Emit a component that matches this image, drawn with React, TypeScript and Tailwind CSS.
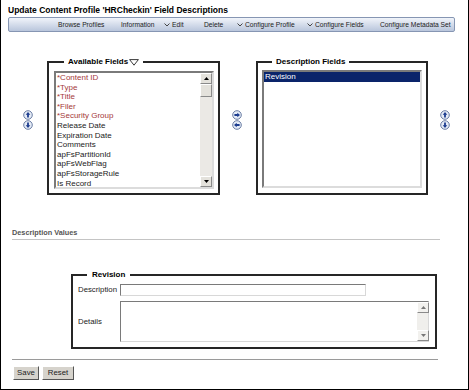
import React from 'react';

function RoundBtn({ dir }: { dir: 'up' | 'down' | 'left' | 'right' }) {
  const rot = { up: 0, right: 90, down: 180, left: 270 }[dir];
  return (
    <svg width="10" height="10" viewBox="0 0 10 10" className="block">
      <circle cx="5" cy="5" r="4.3" fill="#e6ecf6" stroke="#5b6f9a" strokeWidth="0.9" />
      <g transform={`rotate(${rot} 5 5)`}>
        <path d="M5 2 L7.3 4.7 H5.9 V7.6 H4.1 V4.7 H2.7 Z" fill="#1c3c8f" />
      </g>
    </svg>
  );
}

function ScrollBtn({ up, light }: { up: boolean; light?: boolean }) {
  return (
    <div className={`w-[12px] h-[11px] ${light ? 'bg-[#f2f1ee]' : 'bg-[#e4e2dc]'} border border-t-white border-l-white border-b-[#8a8a8a] border-r-[#8a8a8a] flex items-center justify-center`}>
      <svg width="5" height="3" viewBox="0 0 5 3">
        <path d={up ? 'M0 3 L2.5 0 L5 3Z' : 'M0 0 L5 0 L2.5 3Z'} fill={light ? '#777' : '#000'} />
      </svg>
    </div>
  );
}

function Chevron() {
  return (
    <svg width="6" height="4" viewBox="0 0 6 4" className="mr-[2px] shrink-0">
      <path d="M0.5 0.5 L3 3 L5.5 0.5" fill="none" stroke="#333" strokeWidth="0.9" />
    </svg>
  );
}

const fields: { t: string; red?: boolean }[] = [
  { t: '*Content ID', red: true },
  { t: '*Type', red: true },
  { t: '*Title', red: true },
  { t: '*Filer', red: true },
  { t: '*Security Group', red: true },
  { t: 'Release Date' },
  { t: 'Expiration Date' },
  { t: 'Comments' },
  { t: 'apFsPartitionId' },
  { t: 'apFsWebFlag' },
  { t: 'apFsStorageRule' },
  { t: 'Is Record' },
];

export default function App() {
  return (
    <div className="w-[469px] h-[390px] box-border border-l border-r border-b border-black bg-white font-['Liberation_Sans',Arial,sans-serif] text-[#222] overflow-hidden">
      {/* Title */}
      <div className="h-[17px] pt-[5px] pl-[7px] text-[8.5px] leading-[10px] font-bold text-black whitespace-nowrap">
        Update Content Profile 'HRCheckin' Field Descriptions
      </div>
      {/* Menu bar */}
      <div className="ml-[7px] w-[447px] h-[15px] rounded-[2px] border border-[#8696b3] bg-gradient-to-b from-[#f1f4fa] to-[#b9c6dc] flex items-center pl-[49px] text-[6.7px] leading-[9px] text-[#222] whitespace-nowrap">
        <span className="w-[63px]">Browse Profiles</span>
        <span className="w-[43px]">Information</span>
        <span className="w-[40px] flex items-center"><Chevron />Edit</span>
        <span className="w-[33px]">Delete</span>
        <span className="w-[70px] flex items-center"><Chevron />Configure Profile</span>
        <span className="w-[73px] flex items-center"><Chevron />Configure Fields</span>
        <span>Configure Metadata Set</span>
      </div>

      {/* Main fields row */}
      <div className="mt-[25px] flex items-start pl-[22px]">
        <div className="w-[10px] mt-[53px] flex flex-col">
          <RoundBtn dir="up" />
          <RoundBtn dir="down" />
        </div>
        <fieldset className="ml-[14px] w-[173px] h-[138px] border-2 border-[#262626] box-border">
          <legend className="ml-[15px] px-[4px] text-[8px] leading-[10px] font-bold text-black flex items-center">
            Available Fields
            <svg width="10" height="7" viewBox="0 0 10 7" className="ml-[1px]">
              <path d="M0.6 0.6 H9.4 L5 6.2 Z" fill="none" stroke="#222" strokeWidth="0.9" />
            </svg>
          </legend>
          <div className="mt-[4px] ml-[5px] w-[160px] h-[118px] border-2 border-t-[#7a7a7a] border-l-[#7a7a7a] border-b-[#dcdcdc] border-r-[#dcdcdc] box-border flex bg-white">
            <div className="flex-1 pl-[1px] text-[8px] leading-[9.6px] whitespace-nowrap overflow-hidden">
              {fields.map((f) => (
                <div key={f.t} className={f.red ? 'text-[#a53a3a]' : 'text-[#222]'}>{f.t}</div>
              ))}
            </div>
            <div className="w-[12px] flex flex-col bg-[#ebe9e5]">
              <ScrollBtn up />
              <div className="h-[13px] bg-[#e4e2dc] border border-t-white border-l-white border-b-[#8a8a8a] border-r-[#8a8a8a]" />
              <div className="flex-1" />
              <ScrollBtn up={false} />
            </div>
          </div>
        </fieldset>
        <div className="ml-[12px] w-[10px] mt-[53px] flex flex-col">
          <RoundBtn dir="right" />
          <RoundBtn dir="left" />
        </div>
        <fieldset className="ml-[14px] w-[172px] h-[138px] border-2 border-[#262626] box-border">
          <legend className="ml-[14px] px-[4px] text-[8px] leading-[10px] font-bold text-black">
            Description Fields
          </legend>
          <div className="mt-[3px] ml-[4px] w-[160px] h-[118px] border-2 border-t-[#7a7a7a] border-l-[#7a7a7a] border-b-[#dcdcdc] border-r-[#dcdcdc] box-border bg-white">
            <div className="bg-[#0a246a] text-white text-[8px] leading-[10px] pl-[1px]">Revision</div>
          </div>
        </fieldset>
        <div className="ml-[12px] w-[10px] mt-[53px] flex flex-col">
          <RoundBtn dir="up" />
          <RoundBtn dir="down" />
        </div>
      </div>

      {/* Description Values */}
      <div className="mt-[33px] ml-[11px] w-[428px] border-b border-[#c4c4c4] text-[7.3px] leading-[10px] font-bold text-[#555] pb-[1px]">
        Description Values
      </div>

      <fieldset className="mt-[30px] ml-[70px] w-[366px] border-2 border-[#262626] box-border pb-[5px]">
        <legend className="ml-[14px] px-[5px] text-[8px] leading-[10px] font-bold text-black">Revision</legend>
        <div className="mt-[4px] flex items-center pl-[5px]">
          <span className="w-[42px] text-[7.8px] leading-[10px]">Description</span>
          <div className="w-[246px] h-[12px] border border-t-[#7a7a7a] border-l-[#7a7a7a] border-b-[#d8d8d8] border-r-[#d8d8d8] bg-white" />
        </div>
        <div className="mt-[5px] flex items-center pl-[5px]">
          <span className="w-[42px] text-[7.8px] leading-[10px]">Details</span>
          <div className="w-[309px] h-[41px] border border-t-[#7a7a7a] border-l-[#7a7a7a] border-b-[#d8d8d8] border-r-[#d8d8d8] bg-white flex justify-end">
            <div className="w-[11px] flex flex-col bg-[#f0efec]">
              <ScrollBtn up light />
              <div className="flex-1" />
              <ScrollBtn up={false} light />
            </div>
          </div>
        </div>
      </fieldset>

      <div className="mt-[10px] ml-[11px] w-[426px] h-px bg-[#9a9a9a]" />

      <div className="mt-[6px] ml-[12px] flex gap-[3px]">
        <button className="w-[26px] h-[14px] bg-[#d6d3cc] border border-t-white border-l-white border-b-[#555] border-r-[#555] text-[7.8px] leading-[10px] text-[#222]">Save</button>
        <button className="w-[32px] h-[14px] bg-[#d6d3cc] border border-t-white border-l-white border-b-[#555] border-r-[#555] text-[7.8px] leading-[10px] text-[#222]">Reset</button>
      </div>
    </div>
  );
}
